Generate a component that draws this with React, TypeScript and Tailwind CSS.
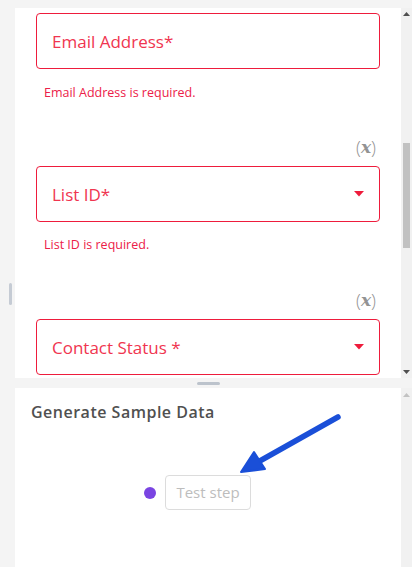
import React from 'react';

const font = { fontFamily: '"Open Sans", "Noto Sans", sans-serif' };

const Caret: React.FC = () => (
  <svg width="10" height="6" viewBox="0 0 10 6" className="shrink-0">
    <path d="M0 0 L10 0 L5 5.5 Z" fill="#ee1c3c" />
  </svg>
);

const VarTag: React.FC = () => (
  <div className="flex justify-end pr-[4px] h-[20px] items-center text-[18px] text-[#939393] leading-none">
    <span className="font-light">(</span>
    <span className="italic font-bold text-[17px]" style={{ fontFamily: '"DejaVu Serif", serif' }}>x</span>
    <span className="font-light">)</span>
  </div>
);

const Field: React.FC<{ label: string; select?: boolean }> = ({ label, select }) => (
  <div className="h-[56px] border border-[#ee1c3c] rounded-[4px] flex items-center justify-between pl-[15px] pr-[15px] shrink-0">
    <span className="text-[17px] text-[#f03550] leading-none">{label}</span>
    {select && <Caret />}
  </div>
);

const ErrorText: React.FC<{ children: React.ReactNode }> = ({ children }) => (
  <p className="pl-[8px] text-[12.5px] leading-[16px] text-[#ec2048]">{children}</p>
);

const App: React.FC = () => {
  return (
    <div className="relative w-[412px] h-[567px] bg-[#f4f4f4] flex overflow-hidden" style={font}>
      {/* left gutter with resize grip */}
      <div className="w-[15px] shrink-0 flex flex-col">
        <div className="mt-[283px] ml-[9px] w-[3px] h-[22px] rounded-full bg-[#c5cbd4]" />
      </div>

      <div className="flex-1 flex flex-col pt-[8px]">
        {/* step settings panel */}
        <div className="h-[370px] flex shrink-0">
          <div className="flex-1 bg-white overflow-hidden px-[21px] pt-[5px] flex flex-col">
            <Field label="Email Address*" />
            <div className="mt-[16px]">
              <ErrorText>Email Address is required.</ErrorText>
            </div>
            <div className="mt-[36px]">
              <VarTag />
            </div>
            <div className="mt-[9px]">
              <Field label="List ID*" select />
            </div>
            <div className="mt-[15px]">
              <ErrorText>List ID is required.</ErrorText>
            </div>
            <div className="mt-[37px]">
              <VarTag />
            </div>
            <div className="mt-[9px]">
              <Field label="Contact Status *" select />
            </div>
          </div>
          {/* scrollbar */}
          <div className="w-[11px] bg-[#f1f1f1] flex flex-col items-center justify-between py-[4px]">
            <svg width="7" height="4" viewBox="0 0 7 4">
              <path d="M0 4 L7 4 L3.5 0 Z" fill="#505050" />
            </svg>
            <div className="flex-1 w-full flex flex-col">
              <div className="mt-[127px] mx-[2px] h-[105px] bg-[#c1c1c1]" />
            </div>
            <svg width="7" height="4" viewBox="0 0 7 4">
              <path d="M0 0 L7 0 L3.5 4 Z" fill="#505050" />
            </svg>
          </div>
        </div>

        {/* splitter */}
        <div className="h-[10px] shrink-0 flex items-center justify-center pr-[11px]">
          <div className="w-[23px] h-[3px] rounded-full bg-[#bcc3cc]" />
        </div>

        {/* sample data panel */}
        <div className="flex-1 flex">
          <div className="flex-1 bg-white pl-[16px] pt-[13px] flex flex-col">
            <h2 className="text-[16px] leading-[22px] font-semibold text-[#505050] tracking-[0.5px]">
              Generate Sample Data
            </h2>
            <div className="mt-[52px] ml-[113px] flex items-center gap-[9px]">
              <div className="w-[12px] h-[12px] rounded-full bg-[#7a44e2]" />
              <button className="h-[35px] w-[86px] border border-[#dcdcdc] rounded-[4px] text-[15px] text-[#bdbdbd] flex items-center justify-center">
                Test step
              </button>
            </div>
          </div>
          <div className="w-[11px] bg-[#f1f1f1] flex flex-col items-center pt-[5px]">
            <svg width="7" height="4" viewBox="0 0 7 4">
              <path d="M0 4 L7 4 L3.5 0 Z" fill="#c2c2c2" />
            </svg>
          </div>
        </div>
      </div>

      {/* annotation arrow */}
      <svg className="absolute inset-0 pointer-events-none" width="412" height="567" viewBox="0 0 412 567">
        <line x1="338" y1="417" x2="258" y2="462" stroke="#1a4fd8" strokeWidth="5.5" strokeLinecap="round" />
        <path d="M241 472 L254 452 L265 469 Z" fill="#1a4fd8" stroke="#1a4fd8" strokeWidth="2" strokeLinejoin="round" />
      </svg>
    </div>
  );
};

export default App;
